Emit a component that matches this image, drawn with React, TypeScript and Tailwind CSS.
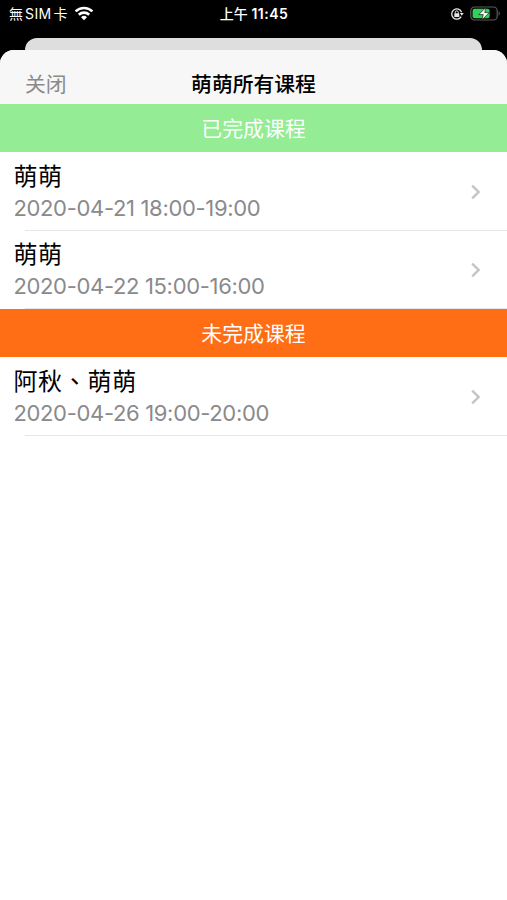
import React from "react";

interface Course {
  id: number;
  students: string;
  time: string;
}

interface SectionProps {
  title: string;
  color: string;
  courses: Course[];
}

const finished: Course[] = [
  { id: 1, students: "萌萌", time: "2020-04-21 18:00-19:00" },
  { id: 2, students: "萌萌", time: "2020-04-22 15:00-16:00" },
];

const unfinished: Course[] = [{ id: 3, students: "阿秋、萌萌", time: "2020-04-26 19:00-20:00" }];

const WifiIcon = () => (
  <svg width="20" height="15" viewBox="0 0 20 15" fill="none" stroke="#fff" strokeWidth="2.6">
    <path d="M1.6 5.4a12 12 0 0 1 16.8 0" />
    <path d="M4.8 8.7a7.5 7.5 0 0 1 10.4 0" />
    <path d="M10 14.2 7 11.2a4.3 4.3 0 0 1 6 0Z" fill="#fff" stroke="none" />
  </svg>
);

const RotationLockIcon = () => (
  <svg width="14" height="14" viewBox="0 0 14 14" fill="none" stroke="#e8e8e8">
    <path d="M11.2 9.6A5.1 5.1 0 1 1 11.6 5.2" strokeWidth="1.3" />
    <path d="M9.9 6.1h3.8l-1.9 2.7Z" fill="#e8e8e8" stroke="none" />
    <rect x="4.3" y="6.3" width="5" height="3.7" rx="0.5" fill="#e8e8e8" stroke="none" />
    <path d="M5.3 6.6V5.4a1.5 1.5 0 0 1 3 0v1.2" strokeWidth="1" />
  </svg>
);

const BatteryIcon = () => (
  <svg width="31" height="16" viewBox="0 0 31 16" fill="none">
    <rect x="0.8" y="1" width="26.4" height="13" rx="3.8" stroke="#5c5c5c" strokeWidth="1.2" />
    <path d="M28.6 5.3c1.6.5 1.6 3.9 0 4.4Z" fill="#5c5c5c" />
    <rect x="2.6" y="2.8" width="17" height="9.4" rx="2" fill="#30d158" />
    <path d="M15.9 1.4 8.8 8.6h4.5L11.9 14l7.3-7.4h-4.5Z" fill="#fff" stroke="#000" strokeWidth="0.6" />
  </svg>
);

const StatusBar = () => (
  <div className="grid grid-cols-3 items-center h-[27px] pl-[9px] pr-[6px] text-white text-[14px] font-medium font-[Inter,'Noto_Sans_CJK_TC',sans-serif]">
    <div className="flex items-center whitespace-nowrap">
      <span className="font-normal">無</span>
      <span className="ml-[2px] font-normal tracking-[0.4px]">SIM</span>
      <span className="ml-[2px] font-normal">卡</span>
      <span className="ml-[6px] -mt-px">
        <WifiIcon />
      </span>
    </div>
    <div className="-ml-[2px] text-center whitespace-nowrap">
      上午 <span className="font-semibold tracking-[0.5px]">11:45</span>
    </div>
    <div className="flex items-center justify-end gap-[6px]">
      <RotationLockIcon />
      <BatteryIcon />
    </div>
  </div>
);

const Chevron = () => (
  <svg width="12" height="18" viewBox="0 0 12 18" fill="none" stroke="#c4c4c6" strokeWidth="2.4">
    <path d="M2.2 2.6 8.6 9l-6.4 6.4" />
  </svg>
);

const CourseRow = ({ course }: { course: Course }) => (
  <li className="flex flex-col h-[78.2px]">
    <div className="flex flex-1 items-center justify-between pt-[1.5px] pl-[13.4px] pr-[25px]">
      <div>
        <p className="h-8 leading-[33px] text-[24px] tracking-[0.7px] text-black">{course.students}</p>
        <p className="h-8 leading-8 text-[22px] tracking-[-0.33px] text-[#8a8a8c]">{course.time}</p>
      </div>
      <Chevron />
    </div>
    <div className="ml-[25px] h-px bg-[#e6e6e8]" />
  </li>
);

const Section = ({ title, color, courses }: SectionProps) => (
  <section>
    <h2
      className={`h-[48.5px] leading-[50px] text-center text-[20.9px] text-white font-[Inter,'Noto_Sans_CJK_SC',sans-serif] ${color}`}
    >
      {title}
    </h2>
    <ul>
      {courses.map((course) => (
        <CourseRow key={course.id} course={course} />
      ))}
    </ul>
  </section>
);

const App = () => {
  return (
    <div className="h-[900px] w-[507px] overflow-hidden bg-black flex flex-col font-[Inter,'Noto_Sans_CJK_TC',sans-serif]">
      <StatusBar />
      <div className="mt-[11px] mx-[25px] h-3 shrink-0 rounded-t-[12px] bg-[#dedede]" />
      <main className="flex-1 overflow-hidden rounded-t-[14px] bg-white">
        <header className="grid grid-cols-3 h-[53.95px] bg-[#f7f7f7] pt-[14px] leading-[42px] text-[20.8px] font-[Inter,'Noto_Sans_CJK_SC',sans-serif]">
          <button className="pl-[25px] text-left text-[#8a8a8a]">关闭</button>
          <h1 className="text-center font-medium text-black whitespace-nowrap">萌萌所有课程</h1>
        </header>
        <Section title="已完成课程" color="bg-[#94ec94]" courses={finished} />
        <Section title="未完成课程" color="bg-[#ff6d14]" courses={unfinished} />
      </main>
    </div>
  );
};

export default App;
